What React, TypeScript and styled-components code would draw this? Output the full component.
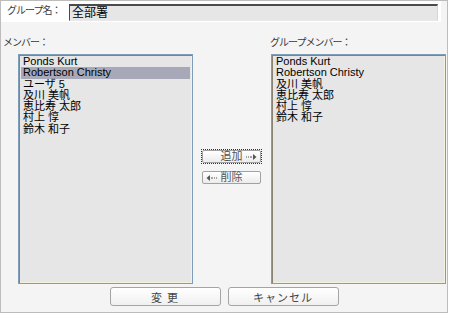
import React, { useState } from 'react'
import styled, { createGlobalStyle } from 'styled-components'

const GlobalStyle = createGlobalStyle`
    body {
        margin: 0;
        background: #ffffff;
        font-family: "Liberation Sans", "Noto Sans CJK JP", sans-serif;
    }
`

const Frame = styled.div`
    box-sizing: border-box;
    width: 448px;
    height: 313px;
    border: 1px solid #bcbcbc;
    background-color: #f4f4f4;
    display: flex;
    flex-direction: column;
`
const NameRow = styled.div`
    display: flex;
    width: 440px;
    height: 21px;
    background-color: #fff;
`
const NameLabel = styled.div`
    flex-shrink: 0;
    width: 62px;
    padding-left: 6px;
    padding-top: 4px;
    font-size: 10px;
    line-height: 12px;
    letter-spacing: -1px;
    white-space: nowrap;
    color: #3a3a3a;
`
const NameInput = styled.div`
    box-sizing: border-box;
    flex-shrink: 0;
    margin-top: 3px;
    width: 369px;
    height: 17px;
    border-top: 2px solid #4a4a4a;
    border-left: 1px solid #4a4a4a;
    border-right: 1px solid #d8d8d8;
    border-bottom: 1px solid #e8e8e8;
    background-color: #e6e6e6;
    padding-left: 2px;
    font-size: 12px;
    line-height: 14px;
    color: #000;
`
const Members = styled.div`
    display: grid;
    grid-template-columns: 192px 77px 176px;
    margin-top: 15px;
`
const Column = styled.div`
    display: flex;
    flex-direction: column;
`
const ColumnLabel = styled.div<{ shift: number }>`
    margin-left: ${p => p.shift}px;
    height: 17px;
    font-size: 10px;
    line-height: 12px;
    letter-spacing: -1px;
    white-space: nowrap;
    color: #3a3a3a;
`
const ListHolder = styled.div<{ indent: number }>`
    padding-left: ${p => p.indent}px;
`
const ListBox = styled.div`
    box-sizing: border-box;
    width: 175px;
    height: 230px;
    border: 1px solid #7f9db9;
    box-shadow: inset 1px 1px 0 #8a8272, inset -1px -1px 0 #f6f1dc;
    background-color: #e6e6e6;
    padding: 1px 2px;
`
const ListRow = styled.div<{ selected?: boolean }>`
    height: 11.3px;
    padding-left: 2px;
    font-size: 11px;
    line-height: 11.3px;
    color: #000;
    white-space: nowrap;
    background-color: ${p => p.selected ? '#a8a9b8' : 'transparent'};
`
const MoveButtons = styled.div`
    display: flex;
    flex-direction: column;
    align-items: center;
    gap: 6px;
    padding-top: 112px;
`
const Focus = styled.div<{ active: boolean }>`
    padding: 1px;
    outline: 1px dotted ${p => p.active ? '#333' : 'transparent'};
    outline-offset: -1px;
`
const MoveButton = styled.div`
    box-sizing: border-box;
    position: relative;
    width: 59px;
    height: 13px;
    border: 1px solid #a2a2a2;
    border-radius: 2px;
    background: linear-gradient(#ffffff, #ececec);
    font-size: 11px;
    line-height: 11px;
    color: #555;
    text-align: center;
`
const Arrow = styled.svg<{ $side: 'left' | 'right' }>`
    position: absolute;
    top: 3px;
    ${p => p.$side === 'left' ? 'left: 3px;' : 'right: 3px;'}
`
const Footer = styled.div`
    display: flex;
    justify-content: center;
    gap: 7px;
    margin-top: 3px;
`
const FooterButton = styled.button`
    box-sizing: border-box;
    width: 111px;
    height: 19px;
    padding: 0;
    border: 1px solid #a4a4a4;
    border-radius: 3px;
    background: linear-gradient(#ffffff, #f0f0f0);
    font-family: inherit;
    font-size: 11px;
    color: #444;
    letter-spacing: 1px;
`

const members = ['Ponds Kurt', 'Robertson Christy', 'ユーザ 5', '及川 美帆', '恵比寿 太郎', '村上 惇', '鈴木 和子']
const groupMembers = ['Ponds Kurt', 'Robertson Christy', '及川 美帆', '恵比寿 太郎', '村上 惇', '鈴木 和子']

const DotArrow: React.FC<{ side: 'left' | 'right' }> = ({ side }) => (
    <Arrow $side={side} width="11" height="6" viewBox="0 0 11 6">
        {side === 'right' ? (
            <g fill="#555">
                <rect x="0" y="2.5" width="1" height="1" />
                <rect x="2" y="2.5" width="1" height="1" />
                <rect x="4" y="2.5" width="2" height="1" />
                <path d="M7 0 L10.5 3 L7 6 Z" />
            </g>
        ) : (
            <g fill="#555">
                <path d="M4 0 L0.5 3 L4 6 Z" />
                <rect x="5" y="2.5" width="2" height="1" />
                <rect x="8" y="2.5" width="1" height="1" />
                <rect x="10" y="2.5" width="1" height="1" />
            </g>
        )}
    </Arrow>
)

const App: React.FC = () => {
    const [selected] = useState(1)
    return (
        <Frame>
            <GlobalStyle />
            <NameRow>
                <NameLabel>グループ名：</NameLabel>
                <NameInput>全部署</NameInput>
            </NameRow>
            <Members>
                <Column>
                    <ColumnLabel shift={2}>メンバー：</ColumnLabel>
                    <ListHolder indent={17}>
                        <ListBox>
                            {members.map((m, i) => (
                                <ListRow key={m} selected={i === selected}>{m}</ListRow>
                            ))}
                        </ListBox>
                    </ListHolder>
                </Column>
                <MoveButtons>
                    <Focus active>
                        <MoveButton>追加<DotArrow side="right" /></MoveButton>
                    </Focus>
                    <Focus active={false}>
                        <MoveButton><DotArrow side="left" />削除</MoveButton>
                    </Focus>
                </MoveButtons>
                <Column>
                    <ColumnLabel shift={0}>グループメンバー：</ColumnLabel>
                    <ListHolder indent={1}>
                        <ListBox>
                            {groupMembers.map(m => (
                                <ListRow key={m}>{m}</ListRow>
                            ))}
                        </ListBox>
                    </ListHolder>
                </Column>
            </Members>
            <Footer>
                <FooterButton>変 更</FooterButton>
                <FooterButton>キャンセル</FooterButton>
            </Footer>
        </Frame>
    )
}

export default App
